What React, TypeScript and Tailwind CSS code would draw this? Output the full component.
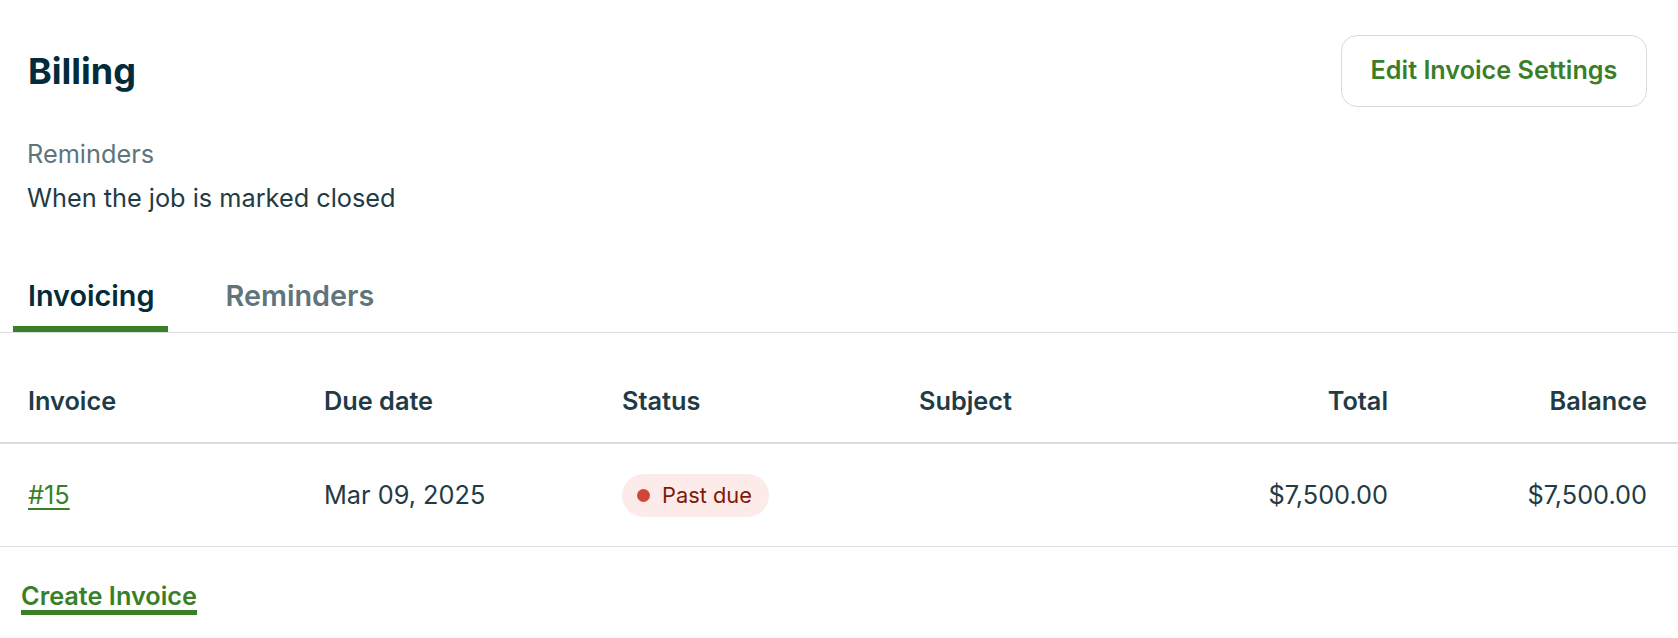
import React from "react";

const font = { fontFamily: "Inter, 'Noto Sans', sans-serif" };

export default function App() {
  return (
    <div className="min-h-[638px] w-full bg-white text-[#1f3b45]" style={font}>
      {/* Header */}
      <div className="flex items-center justify-between pl-[28px] pr-[31px] pt-[35px]">
        <h1 className="text-[36px] font-bold leading-[44px] text-[#032b3a]">Billing</h1>
        <button className="h-[72px] w-[306px] rounded-[16px] border border-[#d5dadb] bg-white text-[25.2px] font-semibold text-[#3a7f28]">
          Edit Invoice Settings
        </button>
      </div>

      {/* Reminder info */}
      <div className="mt-[25px] pl-[27px]">
        <div className="text-[25.3px] leading-[44px] text-[#5f747b]">Reminders</div>
        <div className="text-[25.3px] leading-[44px] text-[#1f3b45]">When the job is marked closed</div>
      </div>

      {/* Tabs */}
      <div className="mt-[45px] flex gap-[43px] border-b border-[#dcdfe0] pl-[13px]">
        <div className="border-b-[6px] border-[#3a7f28] pl-[15px] pr-[13px] pt-[13px] pb-[12px] text-[28.8px] font-semibold leading-[36px] text-[#032b3a]">
          Invoicing
        </div>
        <div className="border-b-[6px] border-transparent pl-[15px] pr-[13px] pt-[13px] pb-[12px] text-[28.8px] font-semibold leading-[36px] text-[#5f747b]">
          Reminders
        </div>
      </div>

      {/* Table header */}
      <div className="grid grid-cols-[296px_298px_297px_1fr_200px_259px] border-b-2 border-[#d8dcdd] pl-[28px] pr-[31px] pt-[49px] pb-[22px] text-[25.3px] font-semibold leading-[38px] text-[#1f3b45]">
        <div>Invoice</div>
        <div>Due date</div>
        <div>Status</div>
        <div>Subject</div>
        <div className="text-right">Total</div>
        <div className="text-right">Balance</div>
      </div>

      {/* Row */}
      <div className="grid h-[103px] grid-cols-[296px_298px_297px_1fr_200px_259px] items-center border-b border-[#dcdfe0] pl-[28px] pr-[31px] text-[25.3px] leading-[38px] text-[#1f3b45]">
        <div>
          <a className="text-[#3a7f28] underline decoration-[2px] underline-offset-[4px]">#15</a>
        </div>
        <div>Mar 09, 2025</div>
        <div>
          <span className="inline-flex h-[43px] items-center gap-[12px] rounded-full bg-[#fcebe8] pl-[15px] pr-[17px] text-[21.8px] text-[#7f1a0a]">
            <span className="h-[13px] w-[13px] rounded-full bg-[#d2463a]" />
            Past due
          </span>
        </div>
        <div></div>
        <div className="text-right">$7,500.00</div>
        <div className="text-right">$7,500.00</div>
      </div>

      {/* Create invoice */}
      <div className="pl-[21px] pt-[30px]">
        <a className="text-[25.3px] font-semibold leading-[38px] text-[#3a7f28] underline decoration-[5px] underline-offset-[5px]">
          Create Invoice
        </a>
      </div>
    </div>
  );
}
